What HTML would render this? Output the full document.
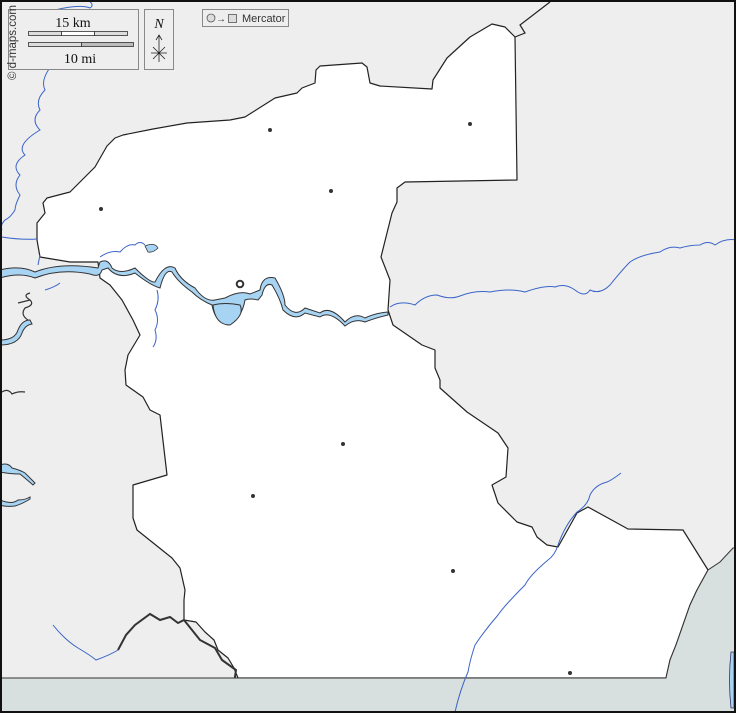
<!DOCTYPE html>
<html><head><meta charset="utf-8"><style>
html,body{margin:0;padding:0;background:#ededed;}
svg{display:block;}
text{font-family:"Liberation Serif",serif;}
</style></head><body>
<svg width="736" height="713" viewBox="0 0 736 713" xmlns="http://www.w3.org/2000/svg">
<rect width="736" height="713" fill="#eeeeee"/>
<path fill="#ffffff" stroke="#222" stroke-width="1.2" stroke-linejoin="round" d="
M40,257 L37,240 L37,223 L45,213 L43,203 L47,198 L70,192 L95,167 L107,146 L115,138 L123,135 L153,129 L187,123 L230,120 L245,117 L275,98 L297,93 L302,88 L315,83 L316,70 L320,66 L362,63 L367,67 L370,83 L380,86 L432,89 L433,80 L447,58 L470,37 L492,24 L505,27 L515,37
L517,180 L405,182 L397,188 L397,202 L392,213 L381,257 L390,280 L388,310 L393,325 L422,345 L435,350 L435,368 L440,380 L440,388 L467,412 L498,433 L508,448 L506,477 L492,485 L498,503 L517,522 L532,527 L537,537 L547,545 L558,547 L577,513 L588,507 L628,529 L683,530 L708,570
L697,590 L690,605 L683,625 L676,645 L670,660 L666,678 L238,678 L234,668 L228,658 L218,650 L214,640 L205,632 L196,622 L184,620 L184,600 L185,590 L180,568 L172,558 L137,530 L133,518 L133,485 L167,475 L160,415 L150,410 L143,397 L126,385 L125,370 L128,355 L140,335 L133,320 L122,300 L110,285 L100,278 L98,262 L70,262 Z"/>
<path fill="none" stroke="#222" stroke-width="1.2" d="M515,37 L525,33 L520,25 L550,2"/>
<path fill="none" stroke="#333" stroke-width="2" d="M118,650 L126,635 L135,625 L150,614 L160,620 L170,617 L178,623 L184,620 L192,630 L200,640 L215,648 L222,660 L236,670 L233,690 L228,700 L224,712"/>
<path fill="#d8dfdf" stroke="#333" stroke-width="1" d="M0,678 L666,678 L670,660 L676,645 L683,625 L690,605 L697,590 L708,570 L720,562 L733,548 L736,548 L736,713 L0,713 Z"/>
<path fill="#a8d4f4" stroke="#336" stroke-width="0.8" d="M731,652 Q728,680 731,708 L734,708 L734,652 Z"/>
<path fill="#a8d4f4" stroke="#333" stroke-width="1" d="M0,270 Q20,265 35,272 Q60,262 98,268 L100,262 Q108,258 112,268 Q120,275 135,268 Q150,283 155,282 Q165,262 175,268 Q180,280 195,288 Q205,302 215,300 L225,298 Q240,290 250,294 L260,290 Q262,275 275,278 Q285,295 285,305 Q295,318 305,308 L320,313 Q330,305 345,322 Q355,312 365,318 Q375,313 388,312 L388,315 Q375,318 365,322 Q355,318 345,326 Q330,310 320,317 L305,313 Q295,322 283,310 Q280,298 272,285 Q265,282 262,295 L258,300 Q250,298 245,300 Q242,318 228,325 Q215,322 212,305 Q200,300 192,292 Q178,282 172,272 Q165,268 160,288 Q150,285 135,273 Q118,280 108,268 L102,270 Q100,278 90,274 Q60,268 35,278 Q20,272 0,278 Z"/>
<path fill="#a8d4f4" stroke="#333" stroke-width="1" d="M213,305 Q225,302 240,305 Q245,315 230,325 Q215,325 213,305 Z"/>
<path fill="#a8d4f4" stroke="#333" stroke-width="1" d="M0,340 Q15,340 18,330 Q22,320 30,320 L32,324 Q25,325 22,333 Q18,345 0,345 Z"/>
<path fill="#a8d4f4" stroke="#333" stroke-width="1" d="M0,465 Q8,462 12,468 Q20,470 25,473 Q30,478 35,483 L33,485 Q25,478 20,474 Q10,474 0,472 Z"/>
<path fill="#a8d4f4" stroke="#333" stroke-width="1" d="M0,500 Q12,505 18,500 Q25,500 30,497 L30,499 Q22,504 15,506 Q5,507 0,505 Z"/>
<path fill="#a8d4f4" stroke="#333" stroke-width="0.8" d="M145,246 Q155,242 158,248 Q153,253 148,252 Z"/>
<path fill="none" stroke="#333" stroke-width="1.2" d="M2,392 Q8,388 12,394 Q18,391 25,392 M28,320 Q20,315 25,308 Q35,305 30,300 Q22,295 30,293 M18,303 L30,300"/>
<g fill="none" stroke="#3a64c8" stroke-width="1">
<path d="M88,0 Q95,5 90,8 Q80,4 55,10 Q52,20 55,25 Q40,35 48,45 Q50,55 52,65 Q40,80 45,90 Q35,100 40,110 Q30,120 40,130 Q15,145 25,155 Q10,165 20,175 Q12,185 20,195 Q15,205 15,210 Q10,218 5,220 Q0,225 2,230"/>
<path d="M2,237 Q20,240 37,239"/>
<path d="M40,255 L38,265 M100,257 Q110,250 120,252 Q128,243 135,245 Q140,240 145,245"/>
<path d="M45,290 Q55,287 60,283"/>
<path d="M157,290 Q160,300 155,310 Q160,320 155,330 Q158,340 153,347"/>
<path d="M390,307 Q400,300 415,305 Q425,295 437,295 Q450,300 460,296 Q475,290 490,292 Q510,288 525,292 Q545,285 555,287 Q565,283 575,290 Q585,298 590,290 Q600,295 610,285 Q622,270 630,262 Q640,255 660,252 Q670,245 680,248 Q690,245 700,245 Q708,240 715,245 Q725,238 736,240"/>
<path d="M621,473 Q612,480 607,482 Q595,485 590,495 Q588,505 577,512 Q565,525 558,545 Q555,555 548,560 Q530,575 525,585 Q505,605 498,615 Q485,630 475,645 Q470,660 468,672 Q460,690 455,712"/>
<path d="M53,625 Q65,640 78,648 Q90,655 96,660 Q110,655 118,650"/>
</g>
<g fill="#333">
<circle cx="270" cy="130" r="2"/><circle cx="470" cy="124" r="2"/><circle cx="331" cy="191" r="2"/><circle cx="101" cy="209" r="2"/><circle cx="343" cy="444" r="2"/><circle cx="253" cy="496" r="2"/><circle cx="453" cy="571" r="2"/><circle cx="570" cy="673" r="2"/>
</g>
<circle cx="240" cy="284" r="3.3" fill="#fff" stroke="#333" stroke-width="2"/>
<rect x="1" y="1" width="734" height="711" fill="none" stroke="#111" stroke-width="2"/>
<rect x="8.5" y="9.5" width="130" height="60" fill="#eeeeee" stroke="#888"/>
<text x="73" y="27" font-size="14" text-anchor="middle" fill="#111">15 km</text>
<rect x="28.5" y="31.5" width="33" height="4" fill="#ddd" stroke="#333" stroke-width="0.8"/>
<rect x="61.5" y="31.5" width="33" height="4" fill="#fff" stroke="#333" stroke-width="0.8"/>
<rect x="94.5" y="31.5" width="33" height="4" fill="#ddd" stroke="#333" stroke-width="0.8"/>
<rect x="28.5" y="42.5" width="53" height="4" fill="#ddd" stroke="#333" stroke-width="0.8"/>
<rect x="81.5" y="42.5" width="52" height="4" fill="#bbb" stroke="#333" stroke-width="0.8"/>
<text x="80" y="63" font-size="14" text-anchor="middle" fill="#111">10 mi</text>
<rect x="144.5" y="9.5" width="29" height="60" fill="#eeeeee" stroke="#888"/>
<text x="159" y="28" font-size="14" font-style="italic" text-anchor="middle" fill="#111">N</text>
<path d="M159,36 L159,62 M156,40 L159,35 L162,40 M151,53 L167,53 M153,47 L165,59 M165,47 L153,59" stroke="#222" stroke-width="0.8" fill="none"/>
<text x="16" y="80" font-size="11.5" fill="#333" transform="rotate(-90 16 80)" style="font-family:'Liberation Sans',sans-serif">© d-maps.com</text>
<rect x="202.5" y="9.5" width="86" height="17" fill="#eeeeee" stroke="#888"/>
<circle cx="211" cy="18" r="4" fill="#ddd" stroke="#555" stroke-width="0.8"/>
<text x="216" y="22" font-size="10" fill="#333" style="font-family:'Liberation Sans',sans-serif">→</text>
<rect x="228.5" y="14.5" width="8" height="8" fill="#ddd" stroke="#555" stroke-width="0.8"/>
<text x="242" y="22" font-size="11" fill="#333" style="font-family:'Liberation Sans',sans-serif">Mercator</text>
</svg>
</body></html>
